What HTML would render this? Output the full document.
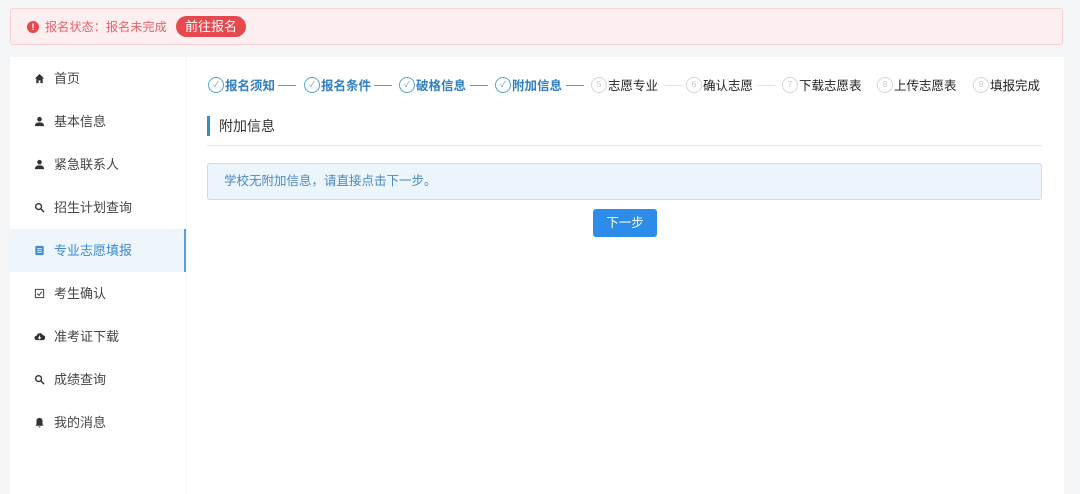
<!DOCTYPE html>
<html><head><meta charset="utf-8"><style>
*{margin:0;padding:0;box-sizing:border-box}
body{width:1080px;height:494px;background:#f3f5f7;font-family:"Liberation Sans","Noto Sans CJK SC",sans-serif;position:relative;overflow:hidden;font-size:13px;color:#333}
.alert{position:absolute;left:10px;top:8px;width:1053px;height:37px;background:#fdeef0;border:1px solid #f5cfd3;border-radius:3px}
.alert .ic{position:absolute;left:16px;top:12px;width:12px;height:12px;border-radius:50%;background:#e5484d;color:#fff;font-size:9px;line-height:12px;text-align:center;font-weight:bold}
.alert .t{position:absolute;left:34px;top:9px;color:#e0656b;font-size:12.2px;line-height:18px}
.alert .b{position:absolute;left:165px;top:7px;width:70px;height:21px;border-radius:11px;background:#e5484d;color:#fff;font-size:13px;line-height:21px;text-align:center}
.side{position:absolute;left:10px;top:57px;width:176px;height:437px;background:#fff}
.mi{position:absolute;left:0;width:176px;height:43px;line-height:43px;padding-left:44px;color:#444;font-size:13px}
.mi .i{position:absolute;left:24px;top:16px;width:11px;height:11px}
.mi.act{background:#eef6fc;color:#3a8ad0;border-right:2px solid #5a9fd6}
.main{position:absolute;left:187px;top:57px;width:877px;height:437px;background:#fff}
.st{position:absolute;top:20px;height:18px;line-height:18px;white-space:nowrap;font-size:12.5px}
.st .c{position:absolute;left:0;top:0;width:16px;height:16px;border-radius:50%;border:1px solid #5c9fd5;text-align:center;font-size:8px;line-height:14px;color:#5c9fd5;font-weight:normal}
.st span.tx{position:absolute;left:17px;top:0}
.st.d{color:#2f7fc1;font-weight:bold}
.st.n{color:#222}
.st.n .c{border-color:#d5d5d5;color:#c5c5c5}
.ln{position:absolute;top:28px;height:1px;background:#5c9fd5;width:18px}
.ln.g{background:#e3e3e3}
h3{position:absolute;left:20px;top:59px;border-left:3px solid #3a8ad0;padding-left:9px;height:20px;line-height:20px;font-size:14px;font-weight:normal;color:#333}
.hr{position:absolute;left:20px;top:88px;width:835px;height:1px;background:#e6e6e6}
.info{position:absolute;left:20px;top:106px;width:835px;height:37px;background:#ecf4fc;border:1px solid #c8ddef;border-radius:3px;color:#4a88c0;font-size:12.5px;line-height:35px;padding-left:16px}
.btn{position:absolute;left:406px;top:152px;width:64px;height:28px;background:#2d8cea;color:#fff;border-radius:3px;text-align:center;line-height:28px;font-size:12.5px}
</style></head><body>
<div class="alert"><div class="ic">!</div><div class="t">报名状态：报名未完成</div><div class="b">前往报名</div></div>
<div class="side">
<div class="mi" style="top:0"><svg class="i" viewBox="0 0 12 12"><path d="M6 1L1 6h1.5v5h2.5V8h2v3h2.5V6H11z" fill="#333"/></svg>首页</div>
<div class="mi" style="top:43px"><svg class="i" viewBox="0 0 12 12"><circle cx="6" cy="3.5" r="2.5" fill="#333"/><path d="M1 11c0-3 2.5-4 5-4s5 1 5 4z" fill="#333"/></svg>基本信息</div>
<div class="mi" style="top:86px"><svg class="i" viewBox="0 0 12 12"><circle cx="6" cy="3.5" r="2.5" fill="#333"/><path d="M1 11c0-3 2.5-4 5-4s5 1 5 4z" fill="#333"/></svg>紧急联系人</div>
<div class="mi" style="top:129px"><svg class="i" viewBox="0 0 12 12"><circle cx="5" cy="5" r="3.2" fill="none" stroke="#333" stroke-width="1.5"/><path d="M7.5 7.5L11 11" stroke="#333" stroke-width="1.6"/></svg>招生计划查询</div>
<div class="mi act" style="top:172px"><svg class="i" viewBox="0 0 12 12"><rect x="1.5" y="1" width="9" height="10" rx="1" fill="#3a8ad0"/><path d="M3.5 4h5M3.5 6h5M3.5 8h5" stroke="#fff" stroke-width="0.9"/></svg>专业志愿填报</div>
<div class="mi" style="top:215px"><svg class="i" viewBox="0 0 12 12"><rect x="1.5" y="1.5" width="9" height="9" fill="none" stroke="#444" stroke-width="1.1"/><path d="M3.5 6l2 2 3-4" fill="none" stroke="#444" stroke-width="1.1"/></svg>考生确认</div>
<div class="mi" style="top:258px"><svg class="i" viewBox="0 0 12 12"><path d="M3 10a2.5 2.5 0 010-5 3.5 3.5 0 016.6-.5A2.5 2.5 0 019.5 10z" fill="#333"/><path d="M6 5v3.5M4.5 7L6 8.5 7.5 7" stroke="#fff" stroke-width="1" fill="none"/></svg>准考证下载</div>
<div class="mi" style="top:301px"><svg class="i" viewBox="0 0 12 12"><circle cx="5" cy="5" r="3.2" fill="none" stroke="#333" stroke-width="1.5"/><path d="M7.5 7.5L11 11" stroke="#333" stroke-width="1.6"/></svg>成绩查询</div>
<div class="mi" style="top:344px"><svg class="i" viewBox="0 0 12 12"><path d="M6 1c-2 0-3.3 1.5-3.3 3.5V8L1.5 9.5h9L9.3 8V4.5C9.3 2.5 8 1 6 1zM4.8 10.3a1.2 1.2 0 002.4 0z" fill="#333"/></svg>我的消息</div>
</div>
<div class="main">
<div class="st d" style="left:21px"><span class="c">✓</span><span class="tx">报名须知</span></div><div class="ln" style="left:91px"></div>
<div class="st d" style="left:117px"><span class="c">✓</span><span class="tx">报名条件</span></div><div class="ln" style="left:187px"></div>
<div class="st d" style="left:212px"><span class="c">✓</span><span class="tx">破格信息</span></div><div class="ln" style="left:283px"></div>
<div class="st d" style="left:308px"><span class="c">✓</span><span class="tx">附加信息</span></div><div class="ln" style="left:379px"></div>
<div class="st n" style="left:404px"><span class="c">5</span><span class="tx">志愿专业</span></div><div class="ln g" style="left:478px"></div>
<div class="st n" style="left:499px"><span class="c">6</span><span class="tx">确认志愿</span></div><div class="ln g" style="left:570px"></div>
<div class="st n" style="left:595px"><span class="c">7</span><span class="tx">下载志愿表</span></div>
<div class="st n" style="left:690px"><span class="c">8</span><span class="tx">上传志愿表</span></div>
<div class="st n" style="left:786px"><span class="c">9</span><span class="tx">填报完成</span></div>
<h3>附加信息</h3>
<div class="hr"></div>
<div class="info">学校无附加信息，请直接点击下一步。</div>
<div class="btn">下一步</div>
</div>
</body></html>
